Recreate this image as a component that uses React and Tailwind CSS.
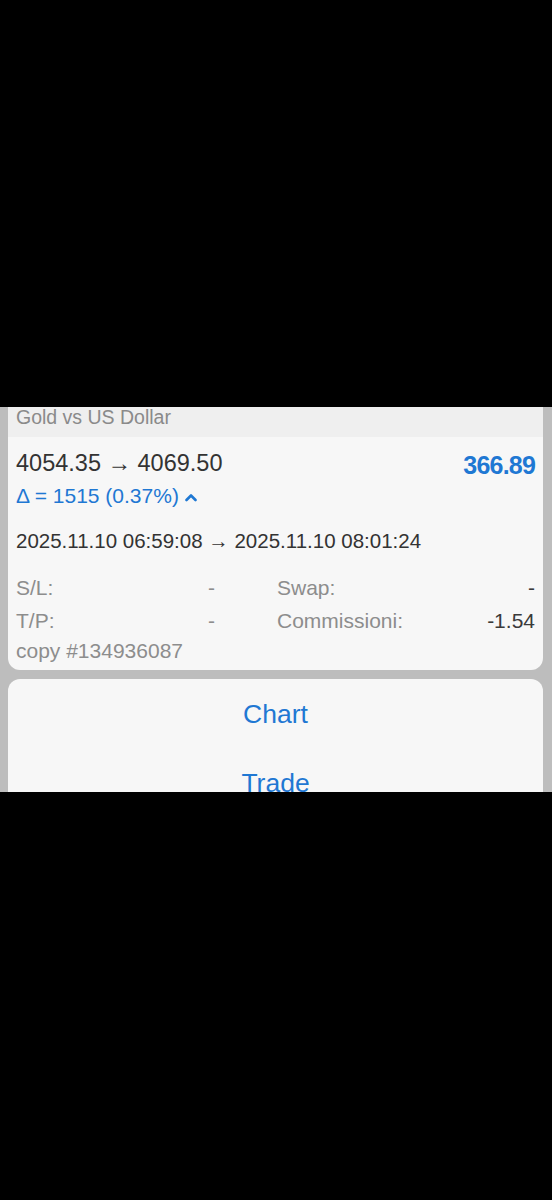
import React from 'react';

const blue = 'text-[#1f78d3]';

function Row({ label, value, label2, value2 }) {
    return (
        <div className="grid grid-cols-[199px_1fr] gap-x-[62px] h-[33px] items-center">
            <div className="flex justify-between text-[#8d8d8d]">
                <span>{label}</span>
                <span>{value}</span>
            </div>
            <div className="flex justify-between text-[#8d8d8d]">
                <span>{label2}</span>
                <span className="text-[#3a3a3a]">{value2}</span>
            </div>
        </div>
    );
}

export default function App() {
    return (
        <div
            className="min-h-screen bg-black"
            style={{ fontFamily: '"Liberation Sans", Arial, sans-serif' }}
        >
            <div className="h-[407px]" />

            {/* Sheet */}
            <div className="h-[385px] overflow-hidden bg-[#bdbdbd] pl-2 pr-[9px]">
                {/* Position card */}
                <div className="rounded-b-xl bg-[#f7f7f7]">
                    <div className="h-[30px] bg-[#efefef] px-2 text-[19.5px] leading-[21px] text-[#8a8a8a]">
                        Gold vs US Dollar
                    </div>

                    <div className="px-2 pt-[10px] pb-[5px] text-[21px]">
                        <div className="flex items-center justify-between h-[33px]">
                            <span className="text-[23.5px] text-[#333]">4054.35 → 4069.50</span>
                            <span className={`text-[25px] font-bold tracking-[-0.8px] ${blue} mt-[4px]`}>366.89</span>
                        </div>
                        <div className={`flex items-center gap-[6px] h-[32px] ${blue}`}>
                            <span>Δ = 1515 (0.37%)</span>
                            <svg width="12" height="9" viewBox="0 0 12 9" className="mt-[2px]">
                                <polyline points="1.5,7 6,2.5 10.5,7" fill="none" stroke="#1f78d3" strokeWidth="2.6" strokeLinecap="round" strokeLinejoin="round" />
                            </svg>
                        </div>

                        <div className="mt-[13px] h-[32px] flex items-center text-[20.5px] text-[#333] whitespace-nowrap">
                            2025.11.10 06:59:08 → 2025.11.10 08:01:24
                        </div>

                        <div className="mt-[14px]">
                            <Row label="S/L:" value="-" label2="Swap:" value2="-" />
                            <Row label="T/P:" value="-" label2="Commissioni:" value2="-1.54" />
                        </div>
                        <div className="h-[28px] flex items-center text-[#8d8d8d]">copy #134936087</div>
                    </div>
                </div>

                {/* Actions */}
                <div className="mt-[9px] rounded-t-xl bg-[#f7f7f7] pt-[19px]">
                    <div className={`h-[34px] flex items-center justify-center text-[26.5px] ${blue}`}>Chart</div>
                    <div className={`mt-[35px] h-[34px] flex items-center justify-center text-[26.5px] ${blue}`}>Trade</div>
                </div>
            </div>
        </div>
    );
}
